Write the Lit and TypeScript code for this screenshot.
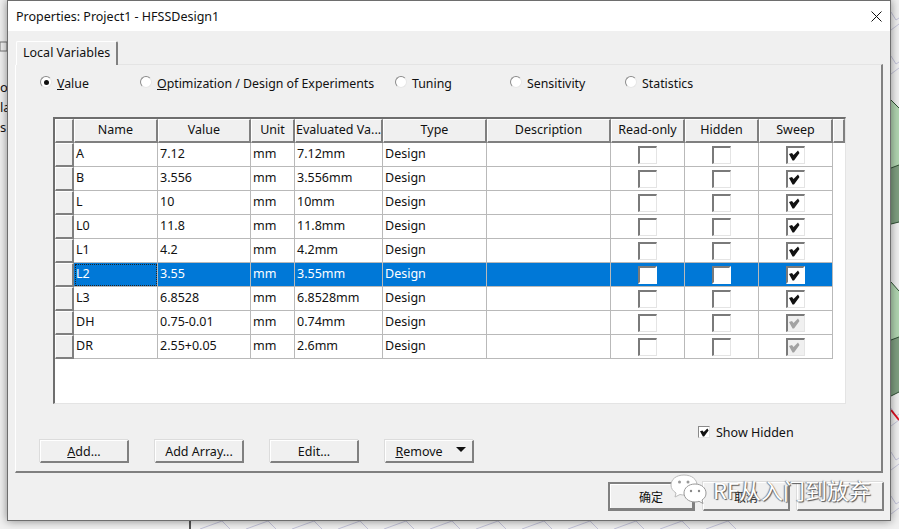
import { LitElement, css, html, svg } from 'lit';
import { customElement } from 'lit/decorators.js';

const COLUMNS = ['Name', 'Value', 'Unit', 'Evaluated Va...', 'Type', 'Description', 'Read-only', 'Hidden', 'Sweep'];

// name, value, evaluated, sweep: 'on' | 'dis'
const ROWS = [
  ['A', '7.12', '7.12mm', 'on'],
  ['B', '3.556', '3.556mm', 'on'],
  ['L', '10', '10mm', 'on'],
  ['L0', '11.8', '11.8mm', 'on'],
  ['L1', '4.2', '4.2mm', 'on'],
  ['L2', '3.55', '3.55mm', 'on'],
  ['L3', '6.8528', '6.8528mm', 'on'],
  ['DH', '0.75-0.01', '0.74mm', 'dis'],
  ['DR', '2.55+0.05', '2.6mm', 'dis'],
];

const SELECTED = 5;

const mesh = () => {
  const lines = [];
  for (let x = 190; x < 700; x += 46) {
    lines.push(svg`<path d="M${x + 10} 529L${x + 32} 521L${x + 40} 529M${x + 32} 521L${x + 46} 518"/>`);
  }
  for (let y = 12; y < 529; y += 44) {
    if (y > 90 && y < 400) continue;
    lines.push(svg`<path d="M891 ${y}L896 ${y + 8}L899 ${y + 6}M891 ${y + 18}L899 ${y + 12}"/>`);
  }
  return lines;
};

@customElement('app-root')
export class AppRoot extends LitElement {
  static styles = css`
    :host {
      display: block;
      position: relative;
      width: 899px;
      height: 529px;
      overflow: hidden;
      background: #f1f1f1;
      font-family: 'Noto Sans', sans-serif;
      font-size: 12.5px;
      color: #111;
    }
    .desktop {
      position: absolute;
      inset: 0;
    }
    .mesh {
      fill: none;
      stroke: #c4c4da;
      stroke-width: 1;
    }
    .scrap {
      position: absolute;
      left: 0;
      font-size: 13px;
      line-height: 16px;
    }
    .dialog {
      position: absolute;
      left: 7px;
      top: 0;
      width: 884px;
      height: 521px;
      box-sizing: border-box;
      border: 1px solid #6e6e6e;
      background: #f0f0f0;
      box-shadow: 0 0 9px rgba(0, 0, 0, 0.45);
      display: flex;
      flex-direction: column;
    }
    .title {
      height: 30px;
      flex: none;
      background: #fff;
      display: flex;
      align-items: center;
      justify-content: space-between;
      padding: 0 8px;
      font-size: 12.5px;
    }
    .close {
      display: block;
    }
    .body {
      padding: 10px 7px 0 7px;
      flex: 1;
      display: flex;
      flex-direction: column;
    }
    .tab {
      position: relative;
      z-index: 1;
      width: 102px;
      height: 24px;
      margin-left: 1px;
      box-sizing: border-box;
      border: 1px solid #fff;
      border-right: 2px solid #808080;
      border-bottom: 0;
      border-radius: 2px 2px 0 0;
      background: #f0f0f0;
      padding-left: 6px;
      line-height: 22px;
      white-space: nowrap;
    }
    .panel {
      height: 409px;
      margin-top: -1px;
      box-sizing: border-box;
      border: 1px solid #fff;
      border-top-color: #e4e4e4;
      border-left-color: #fff;
      border-right: 2px solid #808080;
      border-bottom: 2px solid #808080;
      padding: 6px 0 0 24px;
      display: flex;
      flex-direction: column;
    }
    .radios {
      display: flex;
      height: 24px;
      align-items: center;
      font-size: 12.35px;
    }
    .radio {
      display: flex;
      align-items: center;
      gap: 5px;
      white-space: nowrap;
    }
    .dot {
      width: 12px;
      height: 12px;
      margin-top: -2px;
      flex: none;
      box-sizing: border-box;
      border-radius: 50%;
      background: #fff;
      border: 1px solid #8a8a8a;
      border-right-color: #e6e6e6;
      border-bottom-color: #e6e6e6;
      display: flex;
      align-items: center;
      justify-content: center;
    }
    .dot.on::after {
      content: '';
      width: 5px;
      height: 5px;
      border-radius: 50%;
      background: #111;
    }
    .table {
      width: 793px;
      height: 287px;
      margin: 22px 0 0 13px;
      box-sizing: border-box;
      border-top: 2px solid #6e6e6e;
      border-left: 2px solid #6e6e6e;
      border-right: 1px solid #e4e4e4;
      border-bottom: 1px solid #e4e4e4;
      background: #fff;
    }
    .row {
      display: grid;
      grid-template-columns: 19px 84px 93px 44px 88px 104px 124px 74px 74px 74px 12px;
      height: 24px;
    }
    .head {
      box-sizing: border-box;
      background: #f0f0f0;
      border-top: 1px solid #fff;
      border-left: 1px solid #fff;
      border-right: 2px solid #808080;
      border-bottom: 2px solid #808080;
      text-align: center;
      line-height: 20px;
      white-space: nowrap;
      overflow: hidden;
    }
    .cell {
      box-sizing: border-box;
      border-right: 1px solid #b9b9b9;
      border-bottom: 1px solid #b9b9b9;
      padding: 0 0 2px 2px;
      white-space: nowrap;
      overflow: hidden;
      display: flex;
      align-items: center;
    }
    .cell.center {
      justify-content: center;
      padding: 0;
    }
    .row.selected .cell {
      background: #0078d7;
      color: #fff;
    }
    .row.selected .cell.focus {
      outline: 1px dotted #222;
      outline-offset: -2px;
    }
    .box {
      width: 19px;
      height: 18px;
      box-sizing: border-box;
      background: #fff;
      border-top: 2px solid #7a7a7a;
      border-left: 2px solid #7a7a7a;
      border-right: 1px solid #e4e4e4;
      border-bottom: 1px solid #e4e4e4;
      padding: 2px 0 0 1px;
      display: flex;
      align-items: flex-start;
      justify-content: flex-start;
    }
    .row.selected .box {
      border-right: 2px solid #fff;
      border-bottom: 2px solid #fff;
    }
    .box.dis {
      background: #f0f0f0;
    }
    .box.small {
      width: 12px;
      height: 12px;
      padding: 1px 0 0 1px;
      border-width: 1px;
      border-color: #8a8a8a #e4e4e4 #e4e4e4 #8a8a8a;
    }
    .tick {
      display: block;
      fill: #111;
    }
    .box.dis .tick {
      fill: #a2a2a2;
    }
    .show {
      margin: 21px 0 1px 658px;
      height: 14px;
      display: flex;
      align-items: center;
      gap: 6px;
      white-space: nowrap;
    }
    .actions {
      display: flex;
      gap: 26px;
    }
    .btn {
      box-sizing: border-box;
      background: #f0f0f0;
      border-top: 1px solid #fff;
      border-left: 1px solid #fff;
      border-right: 2px solid #808080;
      border-bottom: 2px solid #808080;
      box-shadow: -1px -1px 0 #dcdcdc;
      text-align: center;
      white-space: nowrap;
    }
    .actions .btn {
      width: 89px;
      height: 23px;
      line-height: 22px;
    }
    .btn.menu {
      position: relative;
      padding-right: 20px;
    }
    .btn.menu::after {
      content: '';
      position: absolute;
      right: 6px;
      top: 6px;
      border: 5px solid transparent;
      border-top: 5px solid #111;
      border-bottom: 0;
    }
    .footer {
      display: flex;
      justify-content: flex-end;
      gap: 8px;
      margin: 9px -1px 0 0;
    }
    .footer .btn {
      width: 87px;
      height: 29px;
      line-height: 28px;
      font-family: 'Noto Sans CJK SC', 'Noto Sans', sans-serif;
      font-size: 12px;
    }
    .footer .btn:last-child {
      margin-left: -1px;
    }
    .footer .btn.default {
      border: 2px solid #808080;
      border-right-width: 3px;
      border-bottom-width: 3px;
      box-shadow: inset 1px 1px 0 #fff;
      line-height: 26px;
    }
    .mark {
      position: absolute;
      left: 670px;
      top: 472px;
      display: flex;
      align-items: center;
      gap: 1px;
      color: #fff;
      font-family: 'Noto Sans CJK SC', 'Noto Sans', sans-serif;
      font-size: 22px;
      line-height: 34px;
      text-shadow: 1px 1px 1px #555, -1px 0 1px #777;
      white-space: nowrap;
    }
    .mark svg {
      display: block;
    }
  `;

  tick(w = 11) {
    return html`<svg class="tick" width=${w} height=${w} viewBox="0 0 11 11"><path d="M0 4L3 3L4.500 5L9 0.500L10.500 3L5 10.500L3.500 10.500Z"/></svg>`;
  }

  box(kind: string) {
    return html`<span class="box ${kind === 'dis' ? 'dis' : ''}">${kind ? this.tick() : ''}</span>`;
  }

  radio(label: unknown, width: number, on = false) {
    return html`<label class="radio" style="width:${width}px"><span class="dot ${on ? 'on' : ''}"></span><span>${label}</span></label>`;
  }

  renderRow(row: string[], index: number) {
    const [name, value, evaluated, sweep] = row;
    const selected = index === SELECTED;
    return html`<div class="row ${selected ? 'selected' : ''}">
      <div class="head"></div>
      <div class="cell ${selected ? 'focus' : ''}">${name}</div>
      <div class="cell">${value}</div>
      <div class="cell">mm</div>
      <div class="cell">${evaluated}</div>
      <div class="cell">Design</div>
      <div class="cell"></div>
      <div class="cell center">${this.box('')}</div>
      <div class="cell center">${this.box('')}</div>
      <div class="cell center">${this.box(sweep)}</div>
    </div>`;
  }

  render() {
    return html`
      <div class="desktop">
        <svg width="899" height="529">
          <g class="mesh">${mesh()}</g>
          <path d="M891 100L899 108V165L891 168Z" fill="#b1d5b1"/>
          <path d="M891 168L899 165V222L891 224Z" fill="#7f9f81"/>
          <path d="M891 282L899 291V337L891 340Z" fill="#b1d5b1"/>
          <path d="M891 340L899 337V392L891 396Z" fill="#7f9f81"/>
          <path d="M891 100L899 108M891 168L899 165M891 224L899 222M891 282L899 291M891 340L899 337M891 396L899 392" stroke="#2f4f33" fill="none"/>
          <path d="M891 410L899 420" stroke="#e01020" stroke-width="2"/>
          <path d="M190 521V529" stroke="#555" stroke-width="2"/>
          <rect x="0" y="42" width="7" height="9" fill="none" stroke="#777"/>
        </svg>
        <span class="scrap" style="top:79px">o</span>
        <span class="scrap" style="top:99px">la</span>
        <span class="scrap" style="top:119px">s</span>
      </div>
      <div class="dialog">
        <div class="title">
          <span>Properties: Project1 - HFSSDesign1</span>
          <svg class="close" width="11" height="11" viewBox="0 0 11 11"><path d="M0.500 0.500L10.500 10.500M10.500 0.500L0.500 10.500" stroke="#111" fill="none"/></svg>
        </div>
        <div class="body">
          <div class="tab">Local Variables</div>
          <div class="panel">
            <div class="radios">
              ${this.radio(html`<u>V</u>alue`, 100, true)}
              ${this.radio(html`<u>O</u>ptimization / Design of Experiments`, 255)}
              ${this.radio('Tuning', 115)}
              ${this.radio('Sensitivity', 115)}
              ${this.radio('Statistics', 100)}
            </div>
            <div class="table">
              <div class="row">
                <div class="head"></div>
                ${COLUMNS.map((c) => html`<div class="head">${c}</div>`)}
                <div class="head"></div>
              </div>
              ${ROWS.map((r, i) => this.renderRow(r, i))}
            </div>
            <label class="show"><span class="box small">${this.tick(9)}</span>Show Hidden</label>
            <div class="actions">
              <div class="btn"><u>A</u>dd...</div>
              <div class="btn">Add Array...</div>
              <div class="btn">Edit...</div>
              <div class="btn menu"><u>R</u>emove</div>
            </div>
          </div>
          <div class="footer">
            <div class="btn default">确定</div>
            <div class="btn">取消</div>
            <div class="btn"></div>
          </div>
        </div>
      </div>
      <div class="mark">
        <svg width="42" height="34" viewBox="0 0 42 34">
          <path d="M14 3C6 3 1 7.500 1 13C1 16.500 3 19 6 21L5 25L10 22.500C11.500 23 13 23 15 23C23 23 27 18 27 13C27 7.500 22 3 14 3Z" fill="#fff" stroke="#bbb"/>
          <path d="M25 12C18.500 12 14 16 14 21C14 26 18.500 30 25 30C26.500 30 28 29.700 29 29.300L33 31.500L32 28C35 26 36 24 36 21C36 16 31.500 12 25 12Z" fill="#fff" stroke="#999"/>
          <circle cx="9.500" cy="10" r="1.500" fill="#999"/><circle cx="18" cy="10" r="1.500" fill="#999"/>
          <circle cx="21" cy="19" r="1.200" fill="#888"/><circle cx="29" cy="19" r="1.200" fill="#888"/>
        </svg>
        <span>RF从入门到放弃</span>
      </div>
    `;
  }
}
